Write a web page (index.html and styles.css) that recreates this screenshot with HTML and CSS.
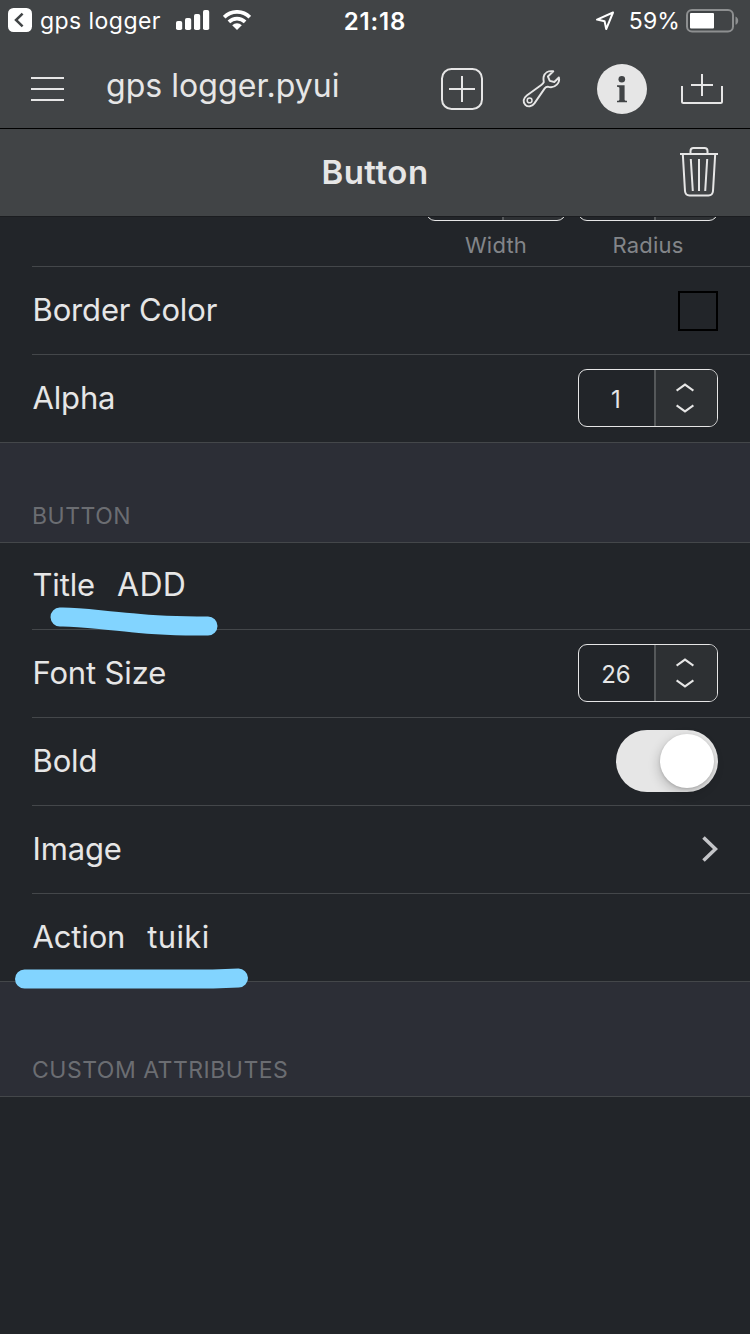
FILE: index.html
```html
<!DOCTYPE html>
<html lang="en">
<head>
<meta charset="utf-8">
<title>gps logger.pyui</title>
<link rel="stylesheet" href="styles.css">
</head>
<body>
<div class="screen">
  <header class="top">
    <div class="status">
      <div class="status-left">
        <svg class="back-app" width="24" height="24" viewBox="0 0 24 24"><rect width="24" height="24" rx="5.5" fill="#fff"/><path d="M14.6 5.6 8 12l6.6 6.4" fill="none" stroke="#414446" stroke-width="2.5"/></svg>
        <span class="app-name">gps logger</span>
        <svg class="signal" width="34" height="20" viewBox="0 0 34 20" fill="#fff"><rect x="0" y="11" width="6.2" height="9" rx="1.8"/><rect x="9" y="8" width="6.2" height="12" rx="1.8"/><rect x="18" y="4" width="6.2" height="16" rx="1.8"/><rect x="27" y="0" width="6.2" height="20" rx="1.8"/></svg>
        <svg class="wifi" width="28" height="20" viewBox="0 0 28 20"><g fill="none" stroke="#fff" stroke-width="3.7"><path d="M1.2 7.1a18.2 18.2 0 0 1 25.6 0"/><path d="M5.9 11.9a11.6 11.6 0 0 1 16.2 0"/></g><path d="M9.2 15.2a7 7 0 0 1 9.6 0L14 20z" fill="#fff"/></svg>
      </div>
      <span class="clock">21:18</span>
      <div class="status-right">
        <svg class="location" width="20" height="20" viewBox="0 0 20 20"><path d="M18 1.500 2 8.600l7.600 1.600 1.600 7.900z" fill="none" stroke="#fff" stroke-width="2" stroke-linejoin="round"/></svg>
        <span class="percent">59%</span>
        <svg class="battery" width="53" height="24" viewBox="0 0 53 24"><rect x="1" y="1" width="46" height="21.4" rx="5" fill="none" stroke="#8d8f90" stroke-width="2"/><rect x="4" y="4" width="24" height="15.4" rx="1" fill="#fff"/><path d="M49.500 7.600c3.600 1.400 3.600 6.800 0 8.200z" fill="#8d8f90"/></svg>
      </div>
    </div>
    <nav class="nav">
      <svg class="menu" width="34" height="26" viewBox="0 0 34 26"><path d="M0 2h33M0 13h33M0 24h33" stroke="#e6e6e6" stroke-width="2"/></svg>
      <span class="file-name">gps logger.pyui</span>
      <div class="tools">
        <svg width="42" height="42" viewBox="0 0 42 42" fill="none" stroke="#e6e6e6" stroke-width="2"><rect x="1" y="1" width="40" height="40" rx="9.500"/><path d="M8 21h26M21 8v26"/></svg>
        <svg class="wrench" width="40" height="40" viewBox="0 0 40 40" fill="none" stroke="#e6e6e6" stroke-width="1.900" stroke-linejoin="round"><path d="M31.300 2.300C26.200 1.500 22.500 4 21.600 8c-.4 2.200-.1 3.600.2 5.200-.5 1.200-1.200 1.800-2.200 2.500L4.800 26.400c-3.700 2.800-4.100 6.800-1.500 9.400 2.600 2.500 6.600 2 9.100-1.400l10.300-15c.8-1.200 1.700-1.700 3-1.700 2.800.9 6.700.5 9.100-2 2-2 2.700-4.500 2.100-7.200L32.300 13l-4.500-1.100-1.900-4.400z"/><circle cx="7.600" cy="31.400" r="2.400" stroke-width="1.500"/></svg>
        <svg class="info" width="50" height="50" viewBox="0 0 50 50"><circle cx="25" cy="25" r="25" fill="#e6e6e6"/><circle cx="24.800" cy="15.300" r="3.300" fill="#414446"/><path d="M20 21.300h7.600v14.200c0 .9.4 1.100 2.400 1.300v1.500H20v-1.500c2-.2 2.400-.4 2.400-1.300V24.300c0-1-.4-1.300-2.400-1.500z" fill="#414446"/></svg>
        <svg class="tray" width="42" height="32" viewBox="0 0 42 32" fill="none" stroke="#e6e6e6" stroke-width="2"><path d="M1 13v15.500q0 1.500 1.500 1.500h37q1.500 0 1.500-1.500V13M10 12h22M21 1v22"/></svg>
      </div>
    </nav>
    <div class="titlebar">
      <span></span>
      <h1 class="title">Button</h1>
      <svg class="trash" width="38" height="50" viewBox="0 0 38 50" fill="none" stroke="#e6e6e6" stroke-width="2"><path d="M0 7h38M10.500 7V4q0-3 3-3h11q3 0 3 3v3M2.800 7l2.200 37q.4 4.500 4.500 4.500h19q4.100 0 4.500-4.500L35.200 7M10.800 12l2 32M19 12v32M27.200 12l-2 32"/></svg>
    </div>
  </header>

  <main>
    <div class="row row-clipped">
      <div class="field"><div class="stub"><i></i></div><span class="caption">Width</span></div>
      <div class="field"><div class="stub"><i></i></div><span class="caption">Radius</span></div>
    </div>
    <div class="row"><span class="label">Border Color</span><span class="swatch"></span></div>
    <div class="row row-last"><span class="label">Alpha</span>
      <div class="stepper"><span class="value">1</span><span class="arrows"><svg width="18" height="30" viewBox="0 0 18 30"><path d="M.6 7.600 9 1.600l8.400 6M.6 22.400l8.400 6 8.400-6" fill="none" stroke="#e6e6e6" stroke-width="2"/></svg></span></div>
    </div>
    <h2 class="section section-button">BUTTON</h2>
    <div class="row row-title"><span class="label">Title</span><span class="entry entry-caps">ADD</span>
      <svg class="marker marker-title" width="172" height="32" viewBox="0 0 172 32"><path d="M12 12c20-.6 40 3.300 72 5.700 30 3.300 50 3.300 76 3.300" fill="none" stroke="#82d4ff" stroke-width="19" stroke-linecap="round"/></svg>
    </div>
    <div class="row"><span class="label">Font Size</span>
      <div class="stepper"><span class="value">26</span><span class="arrows"><svg width="18" height="30" viewBox="0 0 18 30"><path d="M.6 7.600 9 1.600l8.400 6M.6 22.400l8.400 6 8.400-6" fill="none" stroke="#e6e6e6" stroke-width="2"/></svg></span></div>
    </div>
    <div class="row"><span class="label">Bold</span><span class="switch"><span class="knob"></span></span></div>
    <div class="row"><span class="label">Image</span><svg class="chevron" width="17" height="28" viewBox="0 0 17 28"><path d="M2.500 2.500 14.500 14l-12 11.500" fill="none" stroke="#c4c5c8" stroke-width="3.600"/></svg></div>
    <div class="row row-last"><span class="label">Action</span><span class="entry">tuiki</span>
      <svg class="marker marker-action" width="236" height="24" viewBox="0 0 236 24"><path d="M11.500 13H200l25.500-.9" fill="none" stroke="#82d4ff" stroke-width="19" stroke-linecap="round" stroke-linejoin="round"/></svg>
    </div>
    <h2 class="section section-custom">CUSTOM ATTRIBUTES</h2>
  </main>
</div>
</body>
</html>
```
FILE: styles.css
```css
* { box-sizing: border-box; }
body { margin: 0; background: #222529; font-family: Inter, "Liberation Sans", sans-serif; color: #e6e6e6; }
svg { display: block; flex: none; }
h1, h2 { margin: 0; }
.screen { width: 750px; height: 1334px; overflow: hidden; background: #222529; white-space: nowrap; }

.top { background: #414446; height: 217px; border-bottom: 1px solid #1b1d20; }
.status { height: 40px; display: grid; grid-template-columns: 1fr auto 1fr; align-items: center; padding: 1px 11px 0 8px; color: #fff; font-size: 23px; }
.status-left, .status-right { display: flex; align-items: center; }
.status-left svg { margin-top: -1px; }
.status-right { justify-content: flex-end; }
.app-name { width: 120px; margin: 0 16px 0 8px; padding-top: 1px; letter-spacing: .45px; }
.wifi { margin-left: 13px; }
.clock { font-weight: 600; font-size: 24px; letter-spacing: .8px; padding: 1px 0 0 3px; }
.location { margin-right: 1px; }
.percent { margin: 1px 6px 0 13px; letter-spacing: .1px; }

.nav { height: 89px; display: flex; align-items: center; padding: 9px 27px 0 31px; border-bottom: 1px solid #000; }
.file-name { margin-left: 41px; font-size: 32px; letter-spacing: .05px; padding-bottom: 7px; }
.tools { display: flex; align-items: center; margin-left: auto; }
.wrench { margin-left: 39px; }
.info { margin-left: 35px; }
.tray { margin-left: 34px; }

.titlebar { height: 87px; display: grid; grid-template-columns: 1fr auto 1fr; align-items: center; padding: 0 32px 2px; }
.title { font-size: 33px; font-weight: 600; letter-spacing: .5px; padding-top: 1px; }
.trash { justify-self: end; }

.row { position: relative; height: 88px; margin-left: 32px; padding: 0 32px 1px 0; display: flex; align-items: center; border-bottom: 1px solid #44474a; }
.row-last { margin-left: 0; padding-left: 32px; }
.row-title { height: 87px; padding-bottom: 2px; }
.row-clipped { height: 50px; padding-bottom: 0; justify-content: flex-end; align-items: flex-start; gap: 12px; }
.label, .entry { font-size: 31px; padding-bottom: 2px; }
.label { letter-spacing: -.15px; padding-left: .5px; }
.entry { margin-left: 22px; letter-spacing: .35px; }
.entry-caps { font-size: 32px; }

.field { width: 140px; text-align: center; }
.stub { height: 4px; overflow: hidden; display: flex; align-items: flex-end; }
.stub i { flex: none; width: 140px; height: 58px; border: 1px solid #e6e6e6; border-radius: 9px; background: linear-gradient(90deg, #222529 75px, #55585a 75px, #55585a 77px, #2d3033 77px); }
.caption { display: block; margin-top: 10px; font-size: 22px; line-height: 28px; letter-spacing: .2px; color: #838589; }

.swatch { width: 40px; height: 40px; margin: 1px 0 0 auto; border: 2px solid #000; }
.stepper { width: 140px; height: 58px; margin-left: auto; display: flex; border: 1px solid #e6e6e6; border-radius: 9px; overflow: hidden; }
.value { width: 75px; display: flex; align-items: center; justify-content: center; padding: 2px 1px 0 0; font-size: 24px; }
.arrows { flex: 1; display: flex; align-items: center; justify-content: center; padding-right: 3px; border-left: 2px solid #55585a; background: #2d3033; }
.switch { width: 102px; height: 62px; margin-left: auto; display: flex; justify-content: flex-end; align-items: center; padding-right: 4px; border-radius: 31px; background: #e6e6e6; }
.knob { width: 54px; height: 54px; border-radius: 50%; background: #fff; box-shadow: -1px 4px 12px rgba(0, 0, 0, .2), 0 1px 3px rgba(0, 0, 0, .15); }
.chevron { margin-left: auto; }

.section { display: flex; align-items: flex-end; padding: 0 32px 12px; background: #2c2e36; border-bottom: 1px solid #44474a; color: #6b6d72; font-size: 23px; font-weight: 400; line-height: 28px; letter-spacing: .5px; }
.section-button { height: 100px; }
.section-custom { height: 115px; }

.marker { position: absolute; z-index: 1; }
.marker-title { left: 16px; top: 62px; }
.marker-action { left: 13px; top: 72px; }
```
